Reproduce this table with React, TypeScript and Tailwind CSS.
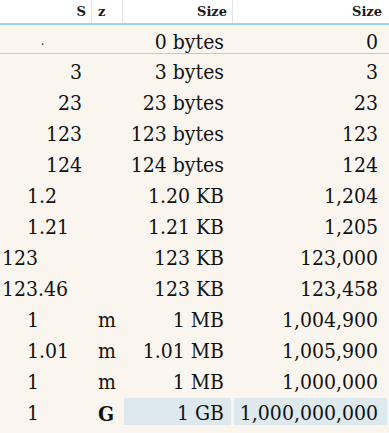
import React from "react";

type Row = {
  s: string;
  align: "right" | "l28" | "l3";
  z?: string;
  zBold?: boolean;
  size: string;
  raw: string;
  hl?: boolean;
};

const rows: Row[] = [
  { s: "3", align: "right", size: "3 bytes", raw: "3" },
  { s: "23", align: "right", size: "23 bytes", raw: "23" },
  { s: "123", align: "right", size: "123 bytes", raw: "123" },
  { s: "124", align: "right", size: "124 bytes", raw: "124" },
  { s: "1.2", align: "l28", size: "1.20 KB", raw: "1,204" },
  { s: "1.21", align: "l28", size: "1.21 KB", raw: "1,205" },
  { s: "123", align: "l3", size: "123 KB", raw: "123,000" },
  { s: "123.46", align: "l3", size: "123 KB", raw: "123,458" },
  { s: "1", align: "l28", z: "m", size: "1 MB", raw: "1,004,900" },
  { s: "1.01", align: "l28", z: "m", size: "1.01 MB", raw: "1,005,900" },
  { s: "1", align: "l28", z: "m", size: "1 MB", raw: "1,000,000" },
  { s: "1", align: "l28", z: "G", zBold: true, size: "1 GB", raw: "1,000,000,000", hl: true },
];

const cols = "grid grid-cols-[92px_31px_110px_156px]";

export default function App() {
  return (
    <div className="w-[389px] h-[433px] bg-[#faf6ef] text-[#111] overflow-hidden">
      {/* header */}
      <div className="grid grid-cols-[92px_31px_110px_156px] bg-white border-b border-[#c9c9c9] text-[13px] font-bold text-[#1a1a1a] font-['DejaVu_Serif',serif]">
        <div className="h-[23px] border-r border-[#e3e3e3] pr-[5px] pt-[1px] leading-[22px] text-right">S</div>
        <div className="h-[23px] border-r border-[#e3e3e3] pl-[6px] pt-[1px] leading-[22px]">z</div>
        <div className="h-[23px] border-r border-[#e3e3e3] pr-[5px] pt-[1px] leading-[22px] text-right">Size</div>
        <div className="h-[23px] pr-[7px] pt-[1px] leading-[22px] text-right">Size</div>
      </div>

      <div className="text-[21px] font-['DejaVu_Serif_Condensed','Liberation_Serif',serif]">
        {/* first row */}
        <div className="grid grid-cols-[92px_31px_110px_156px] border-y border-[#a6d0ee]">
          <div className="h-[28px] pt-[6px] leading-[22px] pl-[41px]">
            <span className="inline-block leading-[22px] text-[12px]">·</span>
          </div>
          <div className="h-[28px]" />
          <div className="h-[28px] pt-[6px] leading-[22px] text-right pr-[9px] whitespace-nowrap">0 bytes</div>
          <div className="h-[28px] pt-[6px] leading-[22px] text-right pr-[11px]">0</div>
        </div>

        {rows.map((r, i) => (
          <div key={i} className={cols + " h-[31px]"}>
            <div
              className={
                r.align === "right"
                  ? "pt-[7px] leading-[23px] text-right pr-[10px]"
                  : r.align === "l28"
                  ? "pt-[7px] leading-[23px] pl-[27px]"
                  : "pt-[7px] leading-[23px] pl-[2px]"
              }
            >
              {r.s}
            </div>
            <div className={"pt-[7px] leading-[23px] pl-[6px] " + (r.zBold ? "font-bold" : "")}>
              {r.z ?? ""}
            </div>
            {r.hl ? (
              <>
                <div className="pt-[3px] pb-[1px] pl-[1px] pr-[2px]">
                  <div className="h-[27px] bg-[#dde9ec] pt-[4px] leading-[23px] text-right pr-[7px] whitespace-nowrap">
                    {r.size}
                  </div>
                </div>
                <div className="pt-[3px] pb-[1px] pl-[1px] pr-[2px]">
                  <div className="h-[27px] bg-[#dde9ec] pt-[4px] leading-[23px] text-right pr-[9px] whitespace-nowrap">
                    {r.raw}
                  </div>
                </div>
              </>
            ) : (
              <>
                <div className="pt-[7px] leading-[23px] text-right pr-[9px] whitespace-nowrap">{r.size}</div>
                <div className="pt-[7px] leading-[23px] text-right pr-[11px] whitespace-nowrap">{r.raw}</div>
              </>
            )}
          </div>
        ))}
      </div>
    </div>
  );
}
